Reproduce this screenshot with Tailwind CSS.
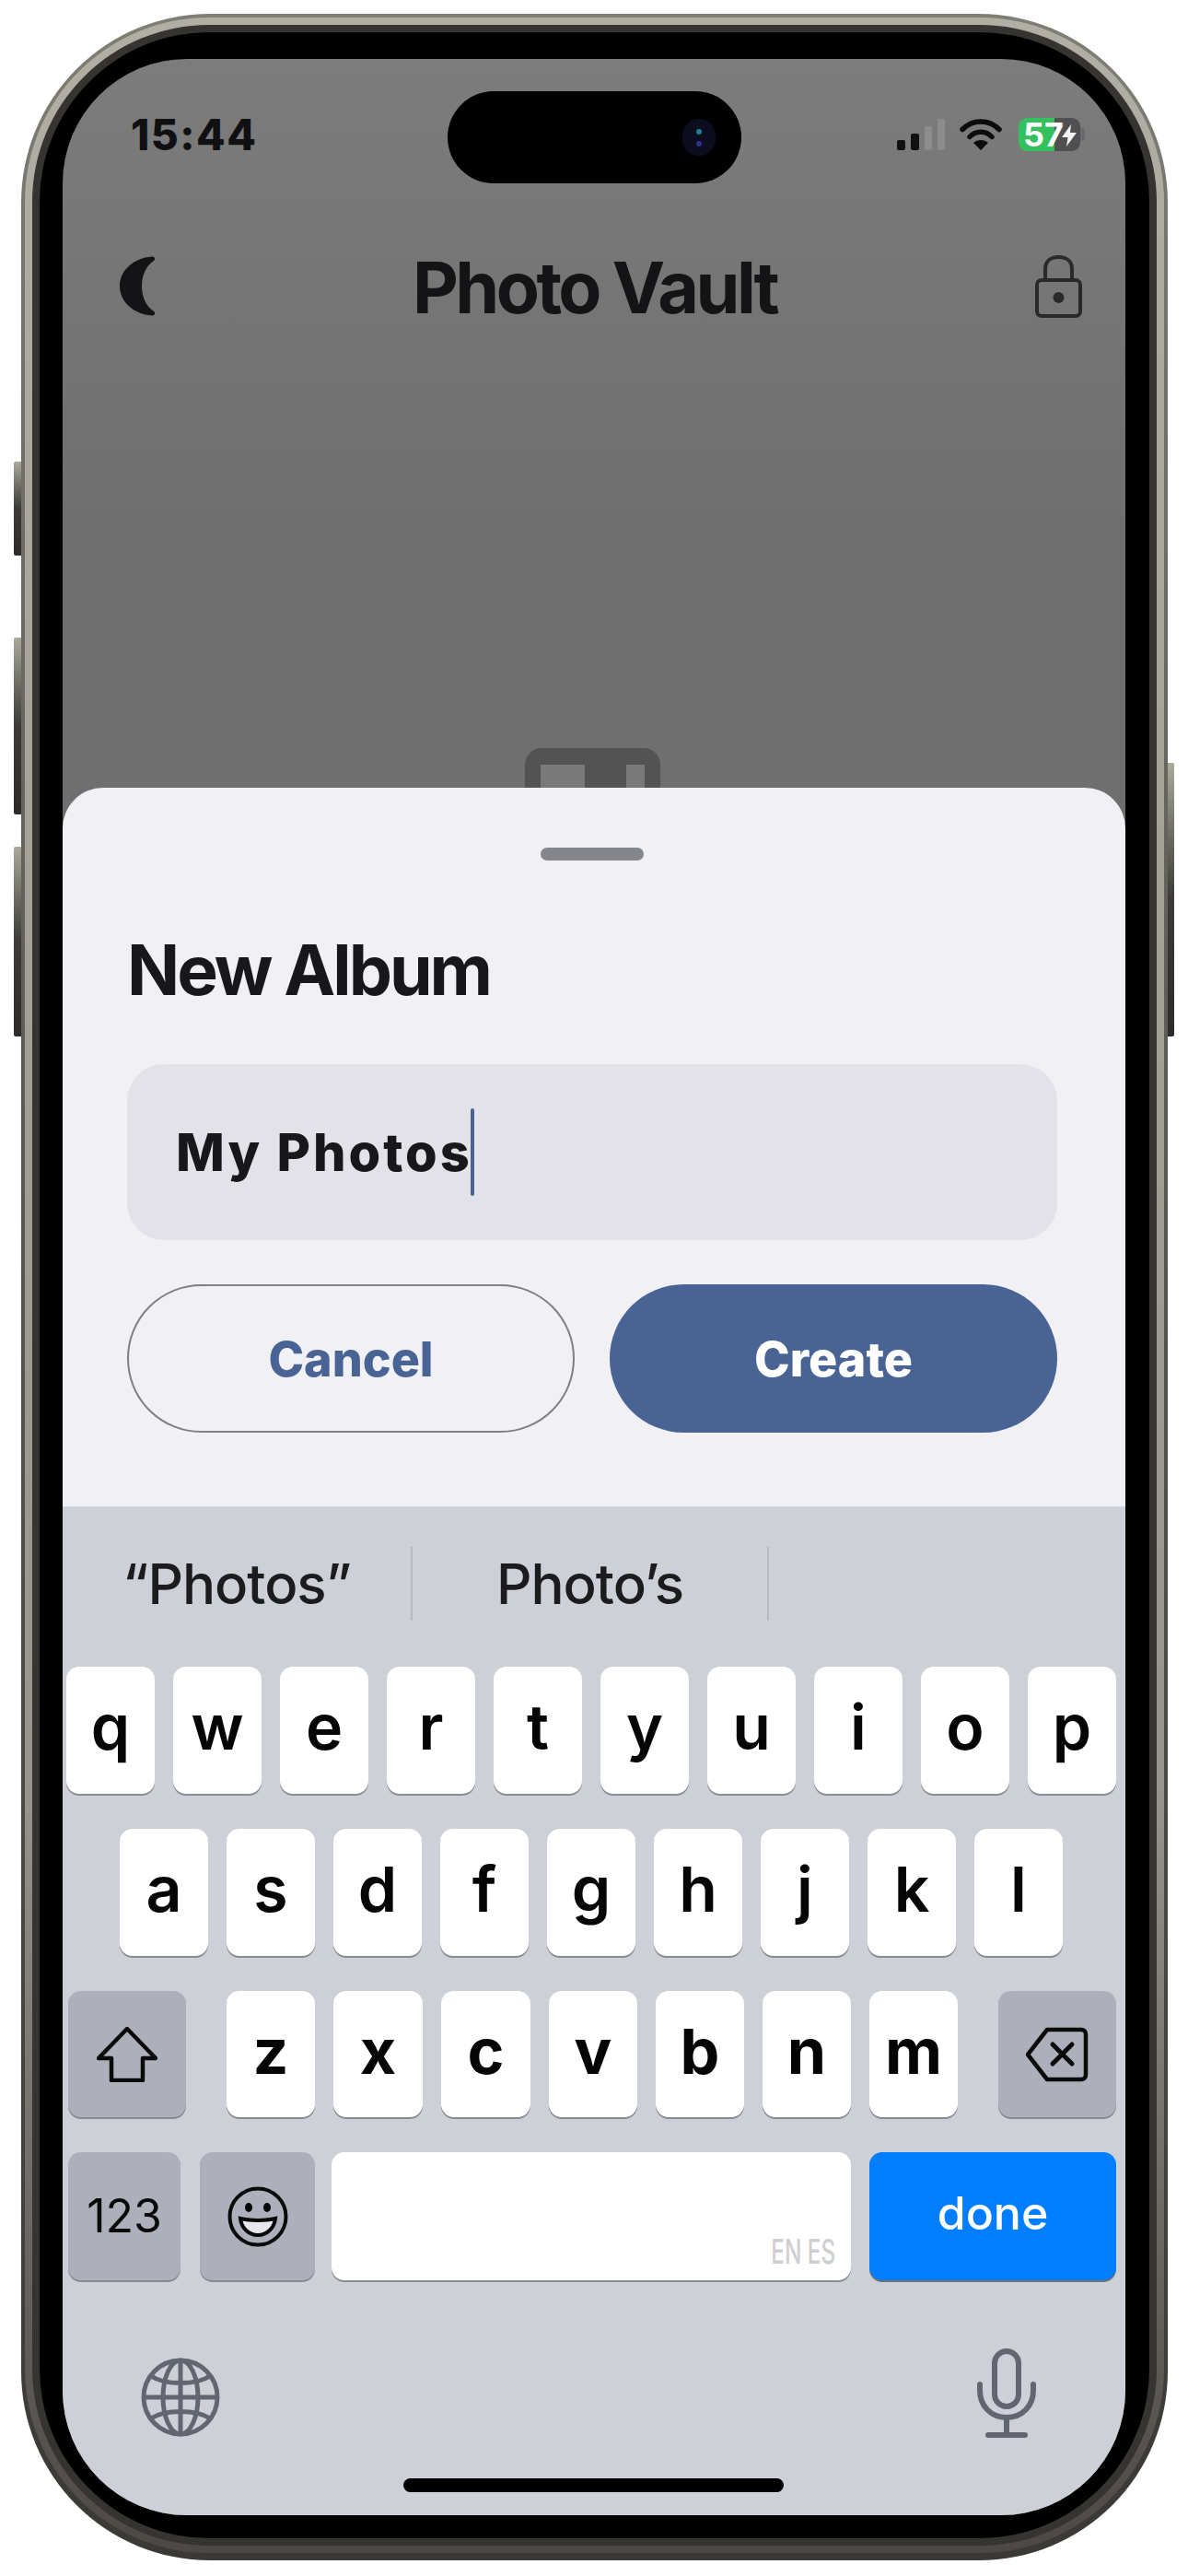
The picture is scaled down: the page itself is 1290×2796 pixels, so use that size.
<!DOCTYPE html>
<html lang="en">
<head>
<meta charset="utf-8">
<title>Photo Vault</title>
<script src="https://cdn.jsdelivr.net/npm/@tailwindcss/browser@4"></script>
</head>
<body class="bg-white">
<div class="relative w-[1290px] h-[2796px] bg-white pl-[23px] pt-[15px] font-['Inter',sans-serif]">
  <!-- side buttons -->
  <div class="absolute left-[15px] top-[501px] w-[8px] h-[102px] rounded-l-[2px] bg-linear-to-b from-[#a9aa9a] via-[#3c3b38] to-[#2c2b29]"></div>
  <div class="absolute left-[15px] top-[692px] w-[8px] h-[192px] rounded-l-[2px] bg-linear-to-b from-[#a9aa9a] via-[#3c3b38] to-[#2c2b29]"></div>
  <div class="absolute left-[15px] top-[919px] w-[8px] h-[206px] rounded-l-[2px] bg-linear-to-b from-[#a9aa9a] via-[#3c3b38] to-[#2c2b29]"></div>
  <div class="absolute left-[1268px] top-[828px] w-[7px] h-[297px] rounded-r-[2px] bg-linear-to-b from-[#a9aa9a] via-[#3c3b38] to-[#2c2b29]"></div>

  <!-- frame rings -->
  <div class="w-[1245px] h-[2764px] rounded-[205px] bg-linear-to-b from-[#7f7e75] via-[#55544f] to-[#3a3936] p-[4px] pb-[8px]">
    <div class="w-full h-full rounded-[200px] bg-linear-to-b from-[#b0afa5] via-[#96948c] via-70% to-[#4a4945] p-[8px]">
      <div class="w-full h-full rounded-[192px] bg-[#353431] p-[8px]">
        <div class="w-full h-full rounded-[184px] bg-black pl-[25px] pt-[29px]">

          <!-- screen -->
          <div class="relative w-[1154px] h-[2666px] rounded-[135px] overflow-hidden flex flex-col bg-linear-to-b from-[#7c7c7c] to-[#6f6f6f] to-[19%] text-[#141416]">

            <!-- dynamic island -->
            <div class="absolute left-[418px] top-[35px] w-[319px] h-[100px] rounded-full bg-black">
              <div class="absolute left-[255px] top-[30px] w-[36px] h-[40px] rounded-full bg-[#0c0d1f] flex flex-col items-center justify-center gap-[7px]">
                <div class="w-[6px] h-[6px] rounded-full bg-[#1f7f95]"></div>
                <div class="w-[6px] h-[6px] rounded-full bg-[#33318f]"></div>
              </div>
            </div>

            <!-- upper page -->
            <div class="h-[791px] shrink-0 overflow-hidden flex flex-col">
              <div class="mt-[64px] h-[36px] pl-[74px] pr-[44px] flex items-center justify-between">
                <span class="text-[46px] leading-[46px] font-extrabold tracking-[1.5px] text-[#101012]">15:44</span>
                <div class="flex items-center">
                  <div class="flex items-end gap-[6px] h-[34px]">
                    <div class="w-[9px] h-[11px] rounded-[2px] bg-[#111]"></div>
                    <div class="w-[9px] h-[18px] rounded-[2px] bg-[#111]"></div>
                    <div class="w-[8px] h-[26px] rounded-[2px] bg-[#8c8c8c]"></div>
                    <div class="w-[8px] h-[34px] rounded-[2px] bg-[#8c8c8c]"></div>
                  </div>
                  <svg class="ml-[16px]" width="46" height="36" viewBox="0 0 46 36" fill="none" stroke="#0c0c0c" stroke-width="5.5" stroke-linecap="round">
                    <path d="M3 12.5C14 1 32 1 43 12.5"/>
                    <path d="M11 20.5C17.5 13.5 28.5 13.5 35 20.5"/>
                    <path d="M23 35L15 27C19.5 23 26.5 23 31 27Z" fill="#0c0c0c" stroke="none"/>
                  </svg>
                  <div class="ml-[18px] relative flex w-[67px] h-[36px]">
                    <div class="w-[39px] rounded-l-[9px] bg-[#34c05c]"></div>
                    <div class="flex-1 rounded-r-[9px] bg-[#505052]"></div>
                    <span class="absolute left-[5px] top-[-4px] text-[36px] leading-[44px] font-bold text-white">57</span>
                    <svg class="absolute left-[47px] top-[7px]" width="16" height="24" viewBox="0 0 16 24" fill="#f2f2f2"><path d="M10 0L0 14H6.5L5 24L16 9H9Z"/></svg>
                  </div>
                  <div class="w-[5px] h-[14px] rounded-r-[3px] bg-[#6a6a6c]"></div>
                </div>
              </div>

              <div class="mt-[111px] h-[68px] pl-[62px] pr-[47px] grid grid-cols-[1fr_auto_1fr] items-center">
                <svg width="39" height="65" viewBox="0 0 39 65" fill="#141416"><path d="M35 0.5C37.5 0 39.5 3 37 5C29 10.5 24 20 24 32.5C24 45 29 54.5 37 60C39.5 62 37.5 65 35 64.5C15 63 0 49.5 0 32.5C0 15.5 15 2 35 0.5Z"/></svg>
                <span class="pr-[14px] pt-[3px] text-[77px] leading-[68px] font-bold tracking-[-3.5px] text-[#141416]">Photo Vault</span>
                <svg class="justify-self-end" width="51" height="68" viewBox="0 0 51 68" fill="none" stroke="#2a2a2c" stroke-width="4">
                  <rect x="2" y="27" width="47" height="39" rx="5"/>
                  <path d="M11 27V15C11 6.5 17 2 25.5 2C34 2 40 6.5 40 15V27"/>
                  <circle cx="25.5" cy="46" r="6" fill="#2a2a2c" stroke="none"/>
                </svg>
              </div>

              <!-- album placeholder, mostly hidden by the sheet -->
              <div class="mt-[469px] ml-[502px] w-[147px] h-[120px] shrink-0 rounded-[18px] bg-[#535353] flex gap-[45px] pl-[17px] pt-[18px]">
                <div class="w-[48px] h-[60px] bg-[#797979]"></div>
                <div class="w-[20px] h-[60px] bg-[#797979]"></div>
              </div>
            </div>

            <!-- sheet -->
            <div class="h-[780px] shrink-0 rounded-t-[44px] bg-[#f0f0f5] pl-[70px] pr-[74px] flex flex-col">
              <div class="mt-[65px] self-center w-[112px] h-[14px] rounded-full bg-[#85868c]"></div>
              <h1 class="mt-[84px] h-[70px] text-[75px] leading-[70px] font-bold tracking-[-3px] text-[#18181b]">New Album</h1>
              <div class="mt-[67px] h-[191px] rounded-[40px] bg-[#e2e2e8] pl-[53px] flex items-center">
                <span class="text-[56px] leading-[70px] font-extrabold tracking-[3px] text-[#18181b]">My Photos</span>
                <div class="ml-[-2px] w-[4px] h-[95px] rounded-full bg-[#4a6395]"></div>
              </div>
              <div class="mt-[48px] flex gap-[38px]">
                <div class="w-[486px] h-[161px] rounded-full border-2 border-[#808084] flex items-center justify-center pt-[2px] text-[52px] font-extrabold text-[#4a6395]">Cancel</div>
                <div class="w-[486px] h-[161px] rounded-full bg-[#4a6395] flex items-center justify-center pt-[2px] text-[52px] font-extrabold text-white">Create</div>
              </div>
            </div>

            <!-- keyboard -->
            <div class="flex-1 bg-[#ced0d7] flex flex-col border-t border-[#d6d7dc]">
              <div class="mt-[43px] h-[80px] grid grid-cols-[380px_387px_1fr] text-[60px] leading-[80px] font-medium text-[#1c1c1f] tracking-[-1px] text-center">
                <div class="border-r-2 border-[#b8bac0]">“Photos”</div>
                <div class="border-r-2 border-[#b8bac0]">Photo’s</div>
                <div></div>
              </div>

              <div class="mt-[50px] flex gap-[20px] pl-[4px] text-[68px] font-semibold text-[#050505]">
                <div class="w-[96px] h-[138px] rounded-[14px] bg-white shadow-[0_2px_0_#898a8f] flex items-center justify-center pb-[8px]">q</div>
                <div class="w-[96px] h-[138px] rounded-[14px] bg-white shadow-[0_2px_0_#898a8f] flex items-center justify-center pb-[8px]">w</div>
                <div class="w-[96px] h-[138px] rounded-[14px] bg-white shadow-[0_2px_0_#898a8f] flex items-center justify-center pb-[8px]">e</div>
                <div class="w-[96px] h-[138px] rounded-[14px] bg-white shadow-[0_2px_0_#898a8f] flex items-center justify-center pb-[8px]">r</div>
                <div class="w-[96px] h-[138px] rounded-[14px] bg-white shadow-[0_2px_0_#898a8f] flex items-center justify-center pb-[8px]">t</div>
                <div class="w-[96px] h-[138px] rounded-[14px] bg-white shadow-[0_2px_0_#898a8f] flex items-center justify-center pb-[8px]">y</div>
                <div class="w-[96px] h-[138px] rounded-[14px] bg-white shadow-[0_2px_0_#898a8f] flex items-center justify-center pb-[8px]">u</div>
                <div class="w-[96px] h-[138px] rounded-[14px] bg-white shadow-[0_2px_0_#898a8f] flex items-center justify-center pb-[8px]">i</div>
                <div class="w-[96px] h-[138px] rounded-[14px] bg-white shadow-[0_2px_0_#898a8f] flex items-center justify-center pb-[8px]">o</div>
                <div class="w-[96px] h-[138px] rounded-[14px] bg-white shadow-[0_2px_0_#898a8f] flex items-center justify-center pb-[8px]">p</div>
              </div>

              <div class="mt-[38px] flex gap-[20px] pl-[62px] text-[68px] font-semibold text-[#050505]">
                <div class="w-[96px] h-[138px] rounded-[14px] bg-white shadow-[0_2px_0_#898a8f] flex items-center justify-center pb-[8px]">a</div>
                <div class="w-[96px] h-[138px] rounded-[14px] bg-white shadow-[0_2px_0_#898a8f] flex items-center justify-center pb-[8px]">s</div>
                <div class="w-[96px] h-[138px] rounded-[14px] bg-white shadow-[0_2px_0_#898a8f] flex items-center justify-center pb-[8px]">d</div>
                <div class="w-[96px] h-[138px] rounded-[14px] bg-white shadow-[0_2px_0_#898a8f] flex items-center justify-center pb-[8px]">f</div>
                <div class="w-[96px] h-[138px] rounded-[14px] bg-white shadow-[0_2px_0_#898a8f] flex items-center justify-center pb-[8px]">g</div>
                <div class="w-[96px] h-[138px] rounded-[14px] bg-white shadow-[0_2px_0_#898a8f] flex items-center justify-center pb-[8px]">h</div>
                <div class="w-[96px] h-[138px] rounded-[14px] bg-white shadow-[0_2px_0_#898a8f] flex items-center justify-center pb-[8px]">j</div>
                <div class="w-[96px] h-[138px] rounded-[14px] bg-white shadow-[0_2px_0_#898a8f] flex items-center justify-center pb-[8px]">k</div>
                <div class="w-[96px] h-[138px] rounded-[14px] bg-white shadow-[0_2px_0_#898a8f] flex items-center justify-center pb-[8px]">l</div>
              </div>

              <div class="mt-[38px] flex pl-[6px] text-[68px] font-bold text-[#050505]">
                <div class="w-[128px] h-[137px] rounded-[14px] bg-[#adb0bb] shadow-[0_2px_0_#898a8f] flex items-center justify-center">
                  <svg width="66" height="60" viewBox="0 0 66 60" fill="none" stroke="#0a0a0a" stroke-width="4.5" stroke-linejoin="round"><path d="M33 2L64 34H50V58H16V34H2Z"/></svg>
                </div>
                <div class="ml-[44px] flex gap-[20px]">
                  <div class="w-[96px] h-[137px] rounded-[14px] bg-white shadow-[0_2px_0_#898a8f] flex items-center justify-center pb-[8px]">z</div>
                  <div class="w-[97px] h-[137px] rounded-[14px] bg-white shadow-[0_2px_0_#898a8f] flex items-center justify-center pb-[8px]">x</div>
                  <div class="w-[97px] h-[137px] rounded-[14px] bg-white shadow-[0_2px_0_#898a8f] flex items-center justify-center pb-[8px]">c</div>
                  <div class="w-[96px] h-[137px] rounded-[14px] bg-white shadow-[0_2px_0_#898a8f] flex items-center justify-center pb-[8px]">v</div>
                  <div class="w-[96px] h-[137px] rounded-[14px] bg-white shadow-[0_2px_0_#898a8f] flex items-center justify-center pb-[8px]">b</div>
                  <div class="w-[96px] h-[137px] rounded-[14px] bg-white shadow-[0_2px_0_#898a8f] flex items-center justify-center pb-[8px]">n</div>
                  <div class="w-[96px] h-[137px] rounded-[14px] bg-white shadow-[0_2px_0_#898a8f] flex items-center justify-center pb-[8px]">m</div>
                </div>
                <div class="ml-[44px] w-[128px] h-[137px] rounded-[14px] bg-[#adb0bb] shadow-[0_2px_0_#898a8f] flex items-center justify-center">
                  <svg width="68" height="60" viewBox="0 0 68 60" fill="none" stroke="#0a0a0a" stroke-width="4.5" stroke-linejoin="round" stroke-linecap="round"><path d="M23 3H60C63 3 65 5 65 8V52C65 55 63 57 60 57H23L2 30Z"/><path d="M29 19L50 40M50 19L29 40" stroke-width="5"/></svg>
                </div>
              </div>

              <div class="mt-[38px] flex pl-[6px]">
                <div class="w-[122px] h-[139px] rounded-[14px] bg-[#adb0bb] shadow-[0_2px_0_#898a8f] flex items-center justify-center text-[50px] text-[#0a0a0a]">123</div>
                <div class="ml-[21px] w-[125px] h-[139px] rounded-[14px] bg-[#adb0bb] shadow-[0_2px_0_#898a8f] flex items-center justify-center">
                  <svg width="66" height="66" viewBox="0 0 66 66" fill="none" stroke="#0a0a0a" stroke-width="4"><circle cx="33" cy="33" r="30.5"/><ellipse cx="23" cy="23" rx="4" ry="5" fill="#0a0a0a" stroke="none"/><ellipse cx="43" cy="23" rx="4" ry="5" fill="#0a0a0a" stroke="none"/><path d="M14 35C24 37.5 42 37.5 52 35C51 45 43 53 33 53C23 53 15 45 14 35Z" fill="#e8e9ee"/></svg>
                </div>
                <div class="ml-[18px] relative w-[564px] h-[139px] rounded-[14px] bg-white shadow-[0_2px_0_#898a8f]">
                  <span class="absolute right-[17px] bottom-[14px] origin-right scale-x-[0.66] text-[37px] leading-[34px] font-medium text-[#cfcfd1] whitespace-nowrap">EN ES</span>
                </div>
                <div class="ml-[20px] w-[268px] h-[139px] rounded-[14px] bg-[#007eff] shadow-[0_2px_0_#6f7176] flex items-center justify-center pb-[6px] text-[50px] font-medium text-white">done</div>
              </div>

              <div class="relative mt-[74px] flex justify-between items-start pl-[85px] pr-[97px]">
                <svg class="mt-[10px]" width="86" height="86" viewBox="0 0 86 86" fill="none" stroke="#626670" stroke-width="5">
                  <circle cx="43" cy="43" r="40"/>
                  <ellipse cx="43" cy="43" rx="19" ry="40"/>
                  <path d="M43 3V83M3 43H83M11 20C26 30 60 30 75 20M11 66C26 56 60 56 75 66"/>
                </svg>
                <svg width="64" height="98" viewBox="0 0 64 98" fill="none" stroke="#626670" stroke-width="6" stroke-linecap="round">
                  <rect x="19" y="3" width="26" height="60" rx="13"/>
                  <path d="M3 39V46C3 62 15 75 32 75C49 75 61 62 61 46V39M32 75V93M12 94H52"/>
                </svg>
              </div>
              <div class="mt-[43px] ml-[370px] w-[413px] h-[15px] rounded-full bg-black"></div>
            </div>
          </div>
        </div>
      </div>
    </div>
  </div>
</div>
</body>
</html>
